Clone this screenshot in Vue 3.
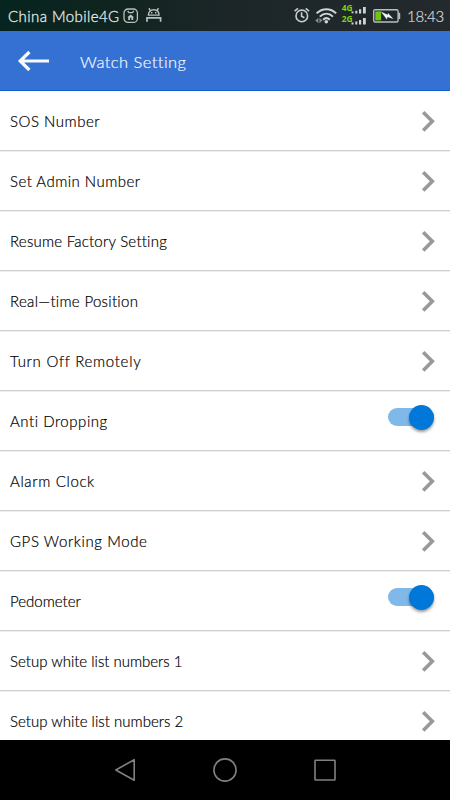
<script setup>
const rows = [
  { label: 'SOS Number', spacing: 0.52 },
  { label: 'Set Admin Number', spacing: 0.47 },
  { label: 'Resume Factory Setting', spacing: 0.23 },
  { label: 'Real—time Position', spacing: 0.31 },
  { label: 'Turn Off Remotely', spacing: 0.72 },
  { label: 'Anti Dropping', spacing: 0.54, toggle: true },
  { label: 'Alarm Clock', spacing: 0.64 },
  { label: 'GPS Working Mode', spacing: 0.6 },
  { label: 'Pedometer', spacing: 0, toggle: true },
  { label: 'Setup white list numbers 1', spacing: 0 },
  { label: 'Setup white list numbers 2', spacing: 0.03 },
]
</script>

<template>
  <div class="screen">
    <div class="status">
      <span class="carrier">China Mobile4G</span>
      <svg class="badge-icon" width="16" height="16" viewBox="0 0 16 16" fill="none" stroke="#b8c0be" stroke-width="1.3">
        <rect x="1" y="1" width="13.4" height="13.4" rx="4" />
        <path d="M4.6 3 6 4.6h3.4L10.8 3" />
        <path d="M4.3 9.2 7.7 6.4l3.4 2.8H10.2V12H5.2V9.2Z" fill="#b8c0be" stroke="none" />
        <path d="M7.7 9.8V12" stroke="#12241f" />
      </svg>
      <svg class="robot-icon" width="16" height="16" viewBox="0 0 16 16" fill="none" stroke="#b8c0be" stroke-width="1.4">
        <path d="M2.4 8.1C2.4 4.8 4.6 2.8 7.7 2.8s5.3 2 5.3 5.3ZM4.4 3.8 3 1.2M11 3.8l1.4-2.6" />
        <path d="M1 14.8v-3.9h13.6v3.9" stroke-width="1.7" />
        <path d="M5 5.8h1.4M9 5.8h1.4" />
      </svg>
      <div class="indicators">
        <svg width="126" height="31" viewBox="290 0 126 31" fill="none">
          <g stroke="#c9cdcf" stroke-width="1.6">
            <circle cx="301.8" cy="15.9" r="5.8" />
            <path d="M301.6 12.2v4l2.8 1.5M294.6 11.2l3.4-2.8M305.7 8.4l3.4 2.8" />
          </g>
          <g stroke="#d0d4d6" stroke-width="2">
            <path d="M316.6 13.4c5.8-5.6 13.8-5.6 19.6 0" />
            <path d="M319.8 16.6c4-3.8 9.2-3.8 13.2 0" />
            <path d="M323 19.7c2.2-2 4.6-2 6.8 0" />
          </g>
          <circle cx="326.3" cy="21.7" r="1.8" fill="#d0d4d6" />
          <path d="m315.2 20.5 3.2-2.8v5.6ZM322.4 20.5l-3-2.8v5.6Z" fill="#858b8e" />
          <g class="network">
            <text x="341.8" y="11" textLength="10.8" lengthAdjust="spacingAndGlyphs">4G</text>
            <text x="341.8" y="22" textLength="10.8" lengthAdjust="spacingAndGlyphs">2G</text>
          </g>
          <path d="M351.5 11.5h2V13.3h-2ZM355.3 10.8h2v2.7h-2ZM359 9.2h2.2v4.3H359ZM363 7h2.8v6.5H363ZM351.5 22.5h2v2h-2ZM355.3 21.5h2v3h-2ZM359 20h2.2v4.5H359ZM363 18h2.8v6.5H363Z" fill="#cfd3d4" />
          <rect x="373.7" y="9.8" width="24.4" height="12.2" rx="1.5" stroke="#b9bdc0" stroke-width="1.4" />
          <path d="M398.5 12.8h1.7v6.2h-1.7Z" fill="#b9bdc0" />
          <path d="M375.3 11.4h5.8v9h-5.8Z" fill="#72c412" />
          <path d="m380.8 11.5 6.8 3.3.4-1.8 5.4 6-5.8-1.9-.7 2.3Z" fill="#f0f0f0" />
        </svg>
        <span class="clock">18:43</span>
      </div>
    </div>

    <div class="header">
      <svg class="back" width="34" height="24" viewBox="0 0 34 24" fill="none" stroke="#f7f9fd" stroke-width="3.2">
        <path d="M4 12h29M13.4 3 4.2 12l9.2 9" />
      </svg>
      <span class="title">Watch Setting</span>
    </div>

    <div class="list">
      <div v-for="row in rows" :key="row.label" class="row">
        <span class="label" :style="{ letterSpacing: row.spacing + 'px' }">{{ row.label }}</span>
        <span v-if="row.toggle" class="toggle"><span class="knob"></span></span>
        <svg v-else class="chevron" width="14" height="22" viewBox="0 0 14 22" fill="none" stroke="#999" stroke-width="3.6">
          <path d="M2.2 2.2 11.3 11.3l-9.1 9.1" />
        </svg>
      </div>
    </div>

    <div class="nav">
      <svg width="222" height="26" viewBox="114 757 222 26" fill="none" stroke="#808080" stroke-width="1.6" stroke-linejoin="round">
        <path d="M134.2 759.7v20.6L115.8 770Z" />
        <circle cx="225" cy="770" r="11.1" />
        <rect x="315" y="760.2" width="20" height="19.8" rx=".6" />
      </svg>
    </div>
  </div>
</template>

<style>
body {
  margin: 0;
}
</style>

<style scoped>
.screen {
  width: 450px;
  height: 800px;
  display: flex;
  flex-direction: column;
  overflow: hidden;
  background: #fff;
  font-family: Lato, "Liberation Sans", sans-serif;
  font-weight: 300;
}
.status {
  height: 31px;
  flex: none;
  display: flex;
  align-items: center;
  box-sizing: border-box;
  padding-left: 8px;
  background: linear-gradient(90deg, #06241f 0%, #10241f 25%, #1c2628 50%, #23292d 100%);
  color: #e4eae9;
}
.carrier {
  width: 115px;
  padding-top: 1px;
  font-size: 15px;
  line-height: 30px;
  letter-spacing: 0.43px;
  white-space: nowrap;
  -webkit-text-stroke: 0.3px currentColor;
}
.badge-icon {
  margin-right: 7px;
}
.robot-icon {
  margin-bottom: 1px;
}
.indicators {
  margin-left: auto;
  display: flex;
}
.network {
  font: bold 8.5px "Open Sans", sans-serif;
  fill: #84d30f;
}
.clock {
  width: 43px;
  margin-left: -9px;
  line-height: 32px;
  font-size: 15px;
  letter-spacing: -0.3px;
  color: #d8dbdd;
  -webkit-text-stroke: 0.2px currentColor;
}
.header {
  height: 60px;
  flex: none;
  display: flex;
  align-items: center;
  box-sizing: border-box;
  padding-left: 16px;
  background: #3571d3;
  border-bottom: 1px solid #0b62cf;
  color: #f6f9ff;
}
.title {
  margin-left: 30px;
  padding-top: 2px;
  font-size: 16.5px;
  letter-spacing: 0.45px;
  white-space: nowrap;
  -webkit-text-stroke: 0.2px currentColor;
}
.list {
  flex: 1;
  min-height: 0;
  overflow: hidden;
}
.row {
  height: 60px;
  box-sizing: border-box;
  display: flex;
  align-items: center;
  justify-content: space-between;
  padding: 0 15px 0 10px;
  border-bottom: 1px solid #cfcfcf;
  box-shadow: 0 1px #efefef;
}
.label {
  padding-top: 1px;
  font-size: 15px;
  line-height: 20px;
  color: #000;
  white-space: nowrap;
  -webkit-text-stroke: 0.2px currentColor;
}
.chevron {
  margin-top: 1px;
}
.toggle {
  width: 46px;
  height: 18px;
  margin: 0 1px 7px 0;
  display: flex;
  justify-content: flex-end;
  align-items: center;
  border-radius: 9px;
  background: #7fb9ea;
}
.knob {
  width: 25px;
  height: 25px;
  border-radius: 50%;
  background: #0078d9;
  box-shadow: 0 2px 3px rgba(0, 0, 0, 0.4);
}
.nav {
  height: 60px;
  flex: none;
  display: flex;
  align-items: center;
  justify-content: center;
  background: #000;
}
</style>
